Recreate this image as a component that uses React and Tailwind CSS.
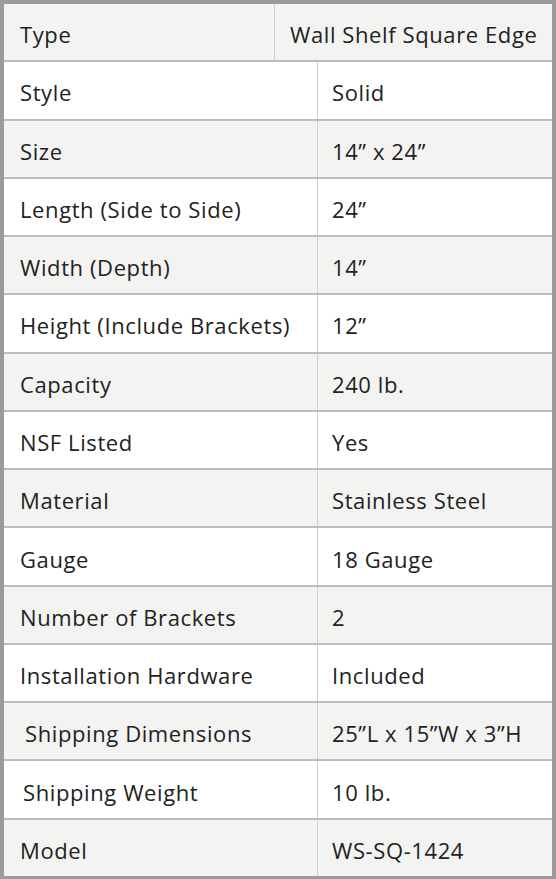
import React from "react";

const rows = [
  ["Type", "Wall Shelf Square Edge"],
  ["Style", "Solid"],
  ["Size", "14\u201D x 24\u201D"],
  ["Length (Side to Side)", "24\u201D"],
  ["Width (Depth)", "14\u201D"],
  ["Height (Include Brackets)", "12\u201D"],
  ["Capacity", "240 lb."],
  ["NSF Listed", "Yes"],
  ["Material", "Stainless Steel"],
  ["Gauge", "18 Gauge"],
  ["Number of Brackets", "2"],
  ["Installation Hardware", "Included"],
  ["Shipping Dimensions", "25\u201DL x 15\u201DW x 3\u201DH"],
  ["Shipping Weight", "10 lb."],
  ["Model", "WS-SQ-1424"],
];

const labelPad = {
  0: "pl-[16px]",
  12: "pl-[21px]",
  13: "pl-[19px]",
};

export default function App() {
  return (
    <div
      className="w-[556px] h-[879px] bg-white border-[#9b9b9b] border-t-[4px] border-l-[4px] border-r-[4px] border-b-[3px] flex flex-col text-[#222] text-[22px] tracking-[0.6px]"
      style={{ fontFamily: '"Open Sans", "Noto Sans", sans-serif' }}
    >
      {rows.map(([k, v], i) => {
        const gray = i % 2 === 0;
        const first = i === 0;
        return (
          <div
            key={k}
            className={`flex flex-1 ${gray ? "bg-[#f3f3f2]" : "bg-white"} ${
              i < rows.length - 1 ? "border-b-2 border-[#bdbdbd]" : ""
            }`}
          >
            <div
              className={`flex items-center pt-[5px] ${first ? "w-[271px]" : "w-[314px]"} border-r border-[#cfcfcf] ${
                labelPad[i] || "pl-[16px]"
              }`}
            >
              {k}
            </div>
            <div className={`flex items-center pt-[5px] flex-1 whitespace-nowrap ${first ? "pl-[15px]" : "pl-[14px]"}`}>
              {v}
            </div>
          </div>
        );
      })}
    </div>
  );
}
